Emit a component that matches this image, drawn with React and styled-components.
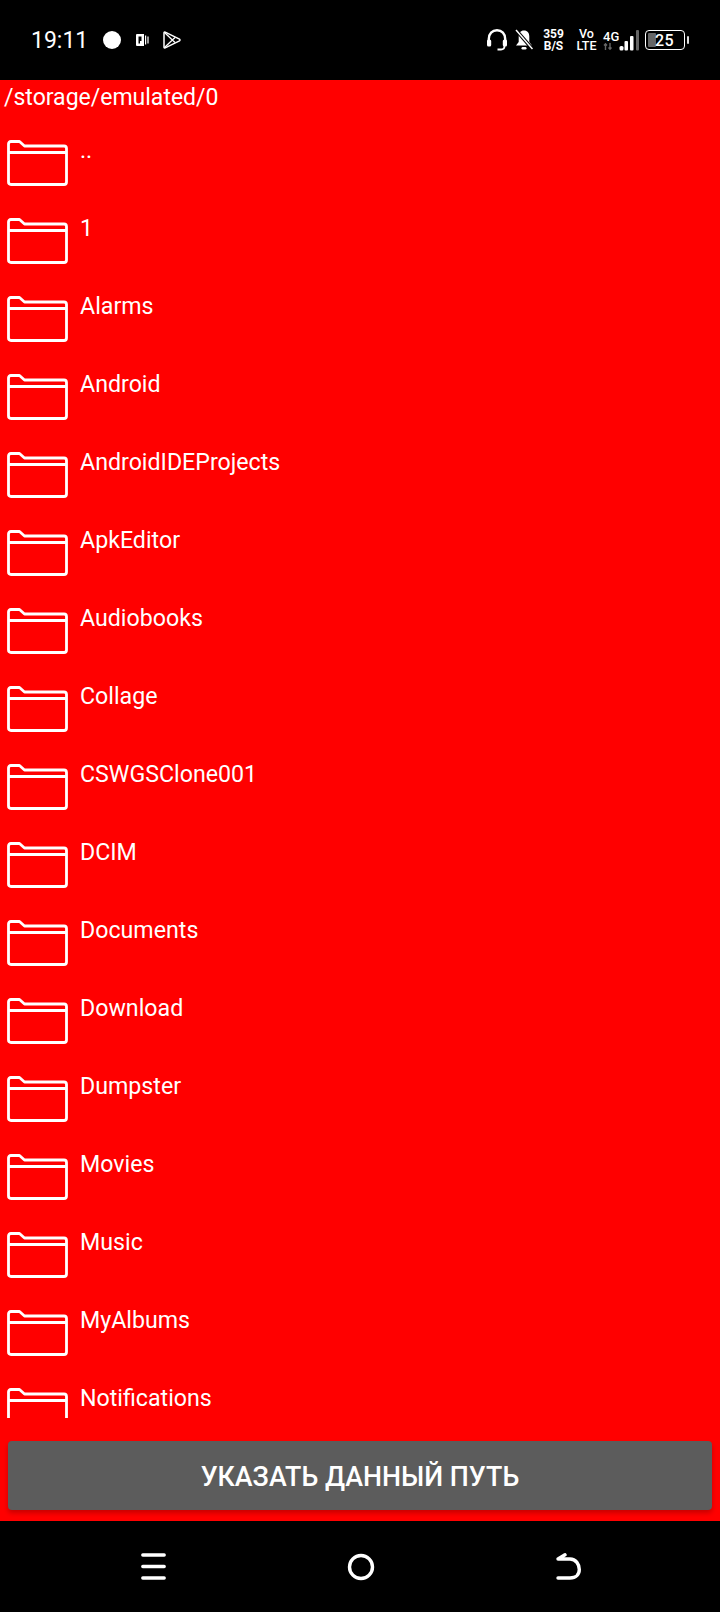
import React from "react";
import styled, { createGlobalStyle } from "styled-components";

const folders = [
  "..",
  "1",
  "Alarms",
  "Android",
  "AndroidIDEProjects",
  "ApkEditor",
  "Audiobooks",
  "Collage",
  "CSWGSClone001",
  "DCIM",
  "Documents",
  "Download",
  "Dumpster",
  "Movies",
  "Music",
  "MyAlbums",
  "Notifications",
];

function FolderIcon() {
  return (
    <FolderSvg viewBox="0 0 61 46" fill="none" stroke="#fff" strokeWidth="2.8">
      <path d="M1.5 12V4Q1.5 1.5 4 1.5H12.5L17.5 6H57Q59.5 6 59.5 8.5V42Q59.5 44.5 57 44.5H4Q1.5 44.5 1.5 42Z" strokeLinejoin="round" />
      <path d="M1.5 12.5H59.5" />
    </FolderSvg>
  );
}

function StatusBar() {
  return (
    <TopBar>
      <LeftGroup>
        <Clock>19:11</Clock>
        <Dot />
        <StatusIcon $gap={15} width="13" height="12" viewBox="0 0 13 12" fill="#fff">
          <path d="M0 1Q0 0 1 0H8V12H1Q0 12 0 11Z" />
          <path d="M2.500 2.500H5.500V7H4V9.500H2.500Z" fill="#000" />
          <path d="M9 1.500H10.200V10.500H9ZM11.400 2.500H12.600V9.500H11.400Z" />
        </StatusIcon>
        <StatusIcon $gap={14} width="18" height="18" viewBox="0 0 18 18" fill="none" stroke="#fff" strokeWidth="1.500" strokeLinejoin="round">
          <path d="M1 1.800Q1 .7 2.200 1.200L16.500 8.200Q17.500 9 16.500 9.800L2.200 16.800Q1 17.300 1 16.200Z" />
          <path d="M1.500 1.500L12 11.500M1.500 16.500L12 6.500" strokeWidth="1.300" />
        </StatusIcon>
      </LeftGroup>
      <RightGroup>
        <StatusIcon $gap={0} width="20" height="22" viewBox="0 0 20 22" fill="none" stroke="#fff" strokeWidth="2.400">
          <path d="M1.800 14V10C1.800 4.800 5.200 1.300 10 1.300S18.200 4.800 18.200 10V14" />
          <rect x="0" y="10.500" width="4.200" height="7" rx="1.500" fill="#fff" stroke="none" />
          <rect x="15.800" y="10.500" width="4.200" height="7" rx="1.500" fill="#fff" stroke="none" />
          <path d="M17.500 17Q17.500 20.500 14 20.500H10.500" strokeWidth="1.800" />
        </StatusIcon>
        <StatusIcon $gap={8} width="18" height="22" viewBox="0 0 18 22" fill="#fff">
          <path d="M9 1.500C12.500 1.500 14.300 4 14.300 7.500V13L17 16.500H1L3.700 13V7.500C3.700 4 5.500 1.500 9 1.500Z" />
          <rect x="6.500" y="18" width="5" height="2.500" rx="1.200" />
          <path d="M1 1L17.500 20" stroke="#000" strokeWidth="3.500" />
          <path d="M1 1L17.500 20" stroke="#fff" strokeWidth="1.500" />
        </StatusIcon>
        <SpeedStack>
          <span>359</span>
          <span>B/S</span>
        </SpeedStack>
        <VoStack>
          <span>Vo</span>
          <span>LTE</span>
        </VoStack>
        <NetStack>
          <span>4G</span>
          <svg width="10" height="7" viewBox="0 0 10 7" fill="none" stroke="#666" strokeWidth="1.400">
            <path d="M2.500 7V1M1 2.500L2.500 .8L4 2.500M7 0V6M5.500 4.500L7 6.200L8.500 4.500" />
          </svg>
        </NetStack>
        <StatusIcon $gap={0} width="20" height="21" viewBox="0 0 20 21" fill="#fff">
          <rect x="0.500" y="16" width="4" height="4.500" rx="1.500" />
          <rect x="5.500" y="11" width="3.500" height="9.500" rx="1" />
          <rect x="11" y="6" width="3.500" height="14.500" rx="1" />
          <rect x="17" y="0" width="3" height="20.500" rx="1" fill="#666" />
        </StatusIcon>
        <Battery>
          <BatteryBody>
            <BatteryLevel />
            <BatteryText>25</BatteryText>
          </BatteryBody>
          <BatteryCap />
        </Battery>
      </RightGroup>
    </TopBar>
  );
}

function App() {
  return (
    <>
      <GlobalStyle />
      <Screen>
        <StatusBar />
        <Main>
          <PathLabel>/storage/emulated/0</PathLabel>
          <FolderList>
            {folders.map((name) => (
              <FolderRow key={name}>
                <FolderIcon />
                <FolderName>{name}</FolderName>
              </FolderRow>
            ))}
          </FolderList>
          <PickButton>УКАЗАТЬ ДАННЫЙ ПУТЬ</PickButton>
        </Main>
        <NavBar>
          <svg width="25" height="27" viewBox="0 0 25 27" fill="none" stroke="#fff" strokeWidth="3.400" strokeLinecap="round">
            <path d="M1.800 2H23.200M1.800 13.500H23.200M1.800 25H23.200" />
          </svg>
          <svg width="28" height="28" viewBox="0 0 28 28" fill="none" stroke="#fff" strokeWidth="3.400">
            <circle cx="14" cy="14" r="11.500" />
          </svg>
          <svg width="25" height="27" viewBox="0 0 25 27" fill="none" stroke="#fff" strokeWidth="3.400" strokeLinecap="round" strokeLinejoin="round">
            <path d="M2 25H14C20 25 23.300 21.500 23.300 16.500S20 6 14 6H2L9 1.800" />
          </svg>
        </NavBar>
      </Screen>
    </>
  );
}

export default App;

const GlobalStyle = createGlobalStyle`
  html, body {
    margin: 0;
    padding: 0;
    background: #000;
  }
  * {
    box-sizing: border-box;
  }
`;

const Screen = styled.div`
  width: 720px;
  height: 1612px;
  display: flex;
  flex-direction: column;
  font-family: Roboto, "Liberation Sans", sans-serif;
  color: #fff;
  overflow: hidden;
`;

const TopBar = styled.div`
  height: 80px;
  flex-shrink: 0;
  background: #000;
  display: flex;
  justify-content: space-between;
  align-items: center;
  padding: 0 31px;
`;

const LeftGroup = styled.div`
  display: flex;
  align-items: center;
`;

const Clock = styled.span`
  font-size: 23px;
  width: 55px;
`;

const Dot = styled.span`
  width: 18px;
  height: 18px;
  margin-left: 17px;
  border-radius: 50%;
  background: #fff;
`;

const StatusIcon = styled.svg`
  flex-shrink: 0;
  margin-left: ${(p) => p.$gap}px;
`;

const RightGroup = styled.div`
  display: flex;
  align-items: center;
`;

const SpeedStack = styled.div`
  display: flex;
  flex-direction: column;
  align-items: center;
  width: 21px;
  margin-left: 10px;
  font-size: 12px;
  line-height: 12px;
  font-weight: 700;
`;

const VoStack = styled.div`
  display: flex;
  flex-direction: column;
  align-items: center;
  width: 19px;
  margin-left: 13px;
  font-size: 12.5px;
  line-height: 12px;
  font-weight: 500;
`;

const NetStack = styled.div`
  display: flex;
  flex-direction: column;
  align-items: flex-start;
  width: 16px;
  margin-left: 7px;
  font-size: 13px;
  line-height: 13px;
  font-weight: 500;
`;

const Battery = styled.div`
  display: flex;
  align-items: center;
  gap: 2px;
  margin-left: 6px;
`;

const BatteryBody = styled.div`
  position: relative;
  width: 40px;
  height: 20px;
  border: 1.5px solid #fff;
  border-radius: 4px;
  display: flex;
  align-items: center;
`;

const BatteryLevel = styled.div`
  position: absolute;
  left: 2px;
  top: 2px;
  bottom: 2px;
  width: 8px;
  background: #666;
  border-radius: 1px;
`;

const BatteryText = styled.span`
  position: relative;
  margin-left: 9px;
  font-size: 16px;
  font-weight: 500;
  line-height: 17px;
  letter-spacing: 0.3px;
`;

const BatteryCap = styled.div`
  width: 2px;
  height: 8px;
  background: #ddd;
  border-radius: 1px;
`;

const Main = styled.div`
  flex: 1;
  min-height: 0;
  background: #f00;
  display: flex;
  flex-direction: column;
`;

const PathLabel = styled.div`
  font-size: 23px;
  line-height: 36px;
  padding-left: 4px;
  flex-shrink: 0;
`;

const FolderList = styled.div`
  height: 1302px;
  flex-shrink: 0;
  overflow: hidden;
  padding-top: 24px;
`;

const FolderRow = styled.div`
  height: 78px;
  display: flex;
  align-items: flex-start;
  padding-left: 7px;
  gap: 12px;
`;

const FolderSvg = styled.svg`
  width: 61px;
  height: 46px;
  flex-shrink: 0;
`;

const FolderName = styled.span`
  font-size: 23.2px;
  line-height: 26px;
  margin-top: -3px;
`;

const PickButton = styled.button`
  display: block;
  flex-shrink: 0;
  height: 69px;
  margin: 23px 8px 0;
  padding: 2px 0 0;
  border: none;
  border-radius: 4px;
  background: #5c5c5c;
  color: #fff;
  font-family: inherit;
  font-size: 26.8px;
  font-weight: 500;
  box-shadow: 0 3px 5px rgba(0, 0, 0, 0.22);
`;

const NavBar = styled.div`
  height: 91px;
  flex-shrink: 0;
  background: #000;
  display: flex;
  align-items: center;
  justify-content: space-between;
  padding: 0 139px 0 141px;
`;
